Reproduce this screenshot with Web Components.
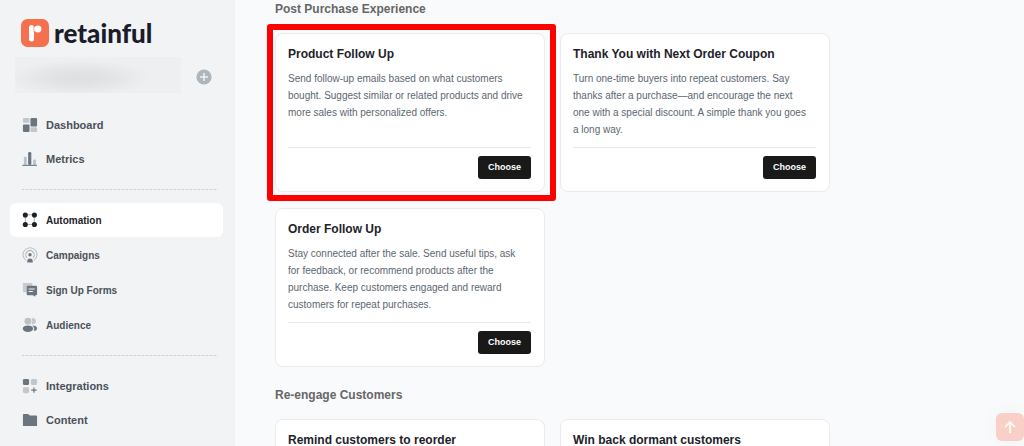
<!DOCTYPE html>
<html lang="en">
<head>
  <meta charset="UTF-8">
  <meta name="viewport" content="width=device-width, initial-scale=1.0">
  <title>Retainful - Automation</title>
  <style>
    body {
      margin: 0;
      font-family: "Liberation Sans", Arial, sans-serif;
      background-color: #f9fafc;
    }
  </style>
</head>
<body>
  <app-shell>
    <app-sidebar slot="sidebar"></app-sidebar>
    <workflow-section heading="Post Purchase Experience">
      <workflow-card heading="Product Follow Up" highlighted>Send follow-up emails based on what customers bought. Suggest similar or related products and drive more sales with personalized offers.</workflow-card>
      <workflow-card heading="Thank You with Next Order Coupon">Turn one-time buyers into repeat customers. Say thanks after a purchase—and encourage the next one with a special discount. A simple thank you goes a long way.</workflow-card>
      <workflow-card heading="Order Follow Up">Stay connected after the sale. Send useful tips, ask for feedback, or recommend products after the purchase. Keep customers engaged and reward customers for repeat purchases.</workflow-card>
    </workflow-section>
    <workflow-section heading="Re-engage Customers">
      <workflow-card heading="Remind customers to reorder"></workflow-card>
      <workflow-card heading="Win back dormant customers"></workflow-card>
    </workflow-section>
  </app-shell>
  <scroll-top></scroll-top>

  <script>
    const ICONS = {
      dashboard: `
        <rect x="1" y="1" width="7" height="5" rx="1" fill="#c1c7ca"/>
        <rect x="9" y="1" width="7" height="9" rx="1" fill="#6b757f"/>
        <rect x="1" y="8" width="7" height="8" rx="1" fill="#6b757f"/>
        <rect x="9" y="11" width="7" height="5" rx="1" fill="#c1c7ca"/>`,
      metrics: `
        <rect x="2" y="6" width="3" height="9" rx="1" fill="#bcc3c6"/>
        <rect x="6.5" y="1" width="3.4" height="14" rx="1.5" fill="#6b757f"/>
        <rect x="11.8" y="9" width="3" height="6" rx="1" fill="#bcc3c6"/>
        <rect x="0.3" y="14.7" width="15.6" height="1.1" fill="#6b757f"/>`,
      automation: `
        <rect x="3.5" y="3" width="9.5" height="10.2" fill="none" stroke="#a5a9ad" stroke-width="1"/>
        <g fill="#1d222a"><circle cx="3.5" cy="3.2" r="2.7"/><circle cx="13.2" cy="3.2" r="2.7"/>
        <circle cx="3.5" cy="13.2" r="2.7"/><circle cx="13.2" cy="13.2" r="2.7"/></g>`,
      campaigns: `
        <path d="M4.3 14.2a7.4 7.4 0 1 1 8.4 0" fill="none" stroke="#b8bec2" stroke-width="1.1"/>
        <path d="M5.3 11.5a4.500 4.500 0 1 1 6.4 0" fill="none" stroke="#a9b0b5" stroke-width="1.1"/>
        <circle cx="8.5" cy="8.3" r="1.8" fill="#6b757f"/>
        <path d="M5.6 16.6v-1.6a2.9 2.9 0 0 1 5.8 0v1.6z" fill="#6b757f"/>`,
      forms: `
        <path d="M1 1h10v4H5v6H1z" fill="#c7cbcf"/>
        <path d="M6 4h9a1 1 0 0 1 1 1v8a1 1 0 0 1-1 1h-1v1.7L11.5 14H6a1 1 0 0 1-1-1V5a1 1 0 0 1 1-1z" fill="#6b757f"/>
        <path d="M7 7.5h6.5M7 10.2h4.5" stroke="#f1f3f5" stroke-width="1.1"/>`,
      audience: `
        <path d="M10 1.6a3.2 3.2 0 1 1 0 5.6a5 5 0 0 0 0-5.6z" fill="#c1c7ca"/>
        <circle cx="6.3" cy="4.4" r="3.7" fill="#bcc3c6"/>
        <ellipse cx="6.3" cy="12.4" rx="5.5" ry="3.5" fill="#6b757f"/>
        <path d="M11 8.9c3 0 5 1.4 5 3.1s-1.3 2.7-3.5 2.8c1-2 .6-4.3-1.5-5.9z" fill="#6b757f"/>`,
      integrations: `
        <rect x="1" y="1" width="6.5" height="6.5" rx="1.5" fill="#6b757f"/>
        <rect x="9.5" y="1" width="6.5" height="6.5" rx="1.5" fill="#c1c7ca"/>
        <rect x="1" y="9.7" width="6.5" height="6.5" rx="1.5" fill="#c1c7ca"/>
        <path d="M12.7 10v5.8M9.8 12.9h5.8" stroke="#6b757f" stroke-width="1.3"/>`,
      content: `
        <path d="M1 3a1 1 0 0 1 1-1h4.5l1.8 1.7H15a1 1 0 0 1 1 1V15H1z" fill="#6b757f"/>`
    };

    class AppShell extends HTMLElement {
      constructor() {
        super();
        this.attachShadow({ mode: 'open' });
      }

      connectedCallback() {
        this.shadowRoot.innerHTML = `
          <style>
            :host {
              display: flex;
              height: 100vh;
              overflow: hidden;
            }
            slot[name="sidebar"] {
              display: block;
              flex: 0 0 235px;
            }
            main {
              flex: 1;
              min-width: 0;
              padding: 1px 40px 0;
            }
          </style>
          <slot name="sidebar"></slot>
          <main><slot></slot></main>
        `;
      }
    }

    class AppLogo extends HTMLElement {
      constructor() {
        super();
        this.attachShadow({ mode: 'open' });
      }

      connectedCallback() {
        this.shadowRoot.innerHTML = `
          <style>
            :host {
              display: flex;
              align-items: center;
              gap: 5px;
              height: 28px;
            }
            svg {
              width: 28px;
              height: 28px;
            }
            span {
              font: 900 26px/28px Lato, sans-serif;
              color: #1b1c29;
            }
          </style>
          <svg viewBox="0 0 28 28" aria-hidden="true">
            <rect width="28" height="28" rx="6.5" fill="#f4704f"/>
            <rect x="8" y="6" width="5" height="16.5" rx="2.5" fill="#fff"/>
            <path d="M12 7.5l3 1v3l-3 2z" fill="#fbd0c4"/>
            <circle cx="17" cy="10" r="3.4" fill="#fff"/>
          </svg>
          <span>retainful</span>
        `;
      }
    }

    class NavItem extends HTMLElement {
      constructor() {
        super();
        this.attachShadow({ mode: 'open' });
      }

      connectedCallback() {
        this.shadowRoot.innerHTML = `
          <style>
            :host {
              display: block;
              font-size: 11px;
              color: #4b5158;
            }
            :host([sub]) {
              font-size: 10px;
            }
            :host([active]) {
              color: #1d222a;
            }
            a {
              display: flex;
              align-items: center;
              gap: 8px;
              height: 34px;
              padding: 0 12px;
              border-radius: 6px;
              color: inherit;
              font-weight: bold;
              text-decoration: none;
            }
            :host([active]) a {
              background-color: #fff;
            }
            svg {
              width: 16px;
              height: 16px;
            }
          </style>
          <a href="#">
            <svg viewBox="0 0 17 17" aria-hidden="true">${ICONS[this.getAttribute('icon')]}</svg>
            <slot></slot>
          </a>
        `;
      }
    }

    class AppSidebar extends HTMLElement {
      constructor() {
        super();
        this.attachShadow({ mode: 'open' });
      }

      connectedCallback() {
        this.shadowRoot.innerHTML = `
          <style>
            :host {
              display: block;
              box-sizing: border-box;
              height: 100%;
              padding-top: 19px;
              background-color: #f1f3f5;
            }
            app-logo {
              margin-left: 21px;
            }
            .store {
              display: flex;
              align-items: center;
              justify-content: space-between;
              margin: 10px 23px 15px 15px;
            }
            .store-name {
              width: 166px;
              height: 36px;
              background: radial-gradient(ellipse 72px 18px at 64px 21px, #dedfe1, #e2e3e5 40%, #eeeff1);
            }
            button {
              padding: 4px 0 0;
              border: 0;
              background: none;
            }
            button svg {
              display: block;
            }
            nav {
              margin: 0 12px 0 10px;
            }
            .group {
              display: grid;
            }
            .sub {
              gap: 1px;
            }
            hr {
              height: 1px;
              margin: 13px 5px 13px 12px;
              border: 0;
              background: repeating-linear-gradient(90deg, #cdd0d3 0 2px, #e6e8ea 2px 4px);
            }
          </style>
          <app-logo></app-logo>
          <div class="store">
            <div class="store-name"></div>
            <button type="button" aria-label="Add store">
              <svg width="16" height="16" viewBox="0 0 16 16">
                <circle cx="8" cy="8" r="7.6" fill="#adb5bd"/>
                <path d="M8 4v8M4 8h8" stroke="#f1f3f5" stroke-width="1.5"/>
              </svg>
            </button>
          </div>
          <nav>
            <div class="group">
              <nav-item icon="dashboard">Dashboard</nav-item>
              <nav-item icon="metrics">Metrics</nav-item>
            </div>
            <hr>
            <div class="group sub">
              <nav-item icon="automation" sub active>Automation</nav-item>
              <nav-item icon="campaigns" sub>Campaigns</nav-item>
              <nav-item icon="forms" sub>Sign Up Forms</nav-item>
              <nav-item icon="audience" sub>Audience</nav-item>
            </div>
            <hr>
            <div class="group">
              <nav-item icon="integrations">Integrations</nav-item>
              <nav-item icon="content">Content</nav-item>
            </div>
          </nav>
        `;
      }
    }

    class WorkflowSection extends HTMLElement {
      constructor() {
        super();
        this.attachShadow({ mode: 'open' });
      }

      connectedCallback() {
        this.shadowRoot.innerHTML = `
          <style>
            :host {
              display: block;
              margin-bottom: 20px;
            }
            h2 {
              margin: 0 0 16px;
              font-size: 12px;
              line-height: 16px;
              color: #666;
            }
            .cards {
              display: grid;
              grid-template-columns: 1fr 1fr;
              gap: 16px 15px;
              max-width: 555px;
            }
          </style>
          <h2>${this.getAttribute('heading')}</h2>
          <div class="cards"><slot></slot></div>
        `;
      }
    }

    class WorkflowCard extends HTMLElement {
      constructor() {
        super();
        this.attachShadow({ mode: 'open' });
      }

      connectedCallback() {
        // cards without a description can't be chosen yet
        const footer = this.textContent.trim()
          ? '<footer><button type="button">Choose</button></footer>'
          : '';

        this.shadowRoot.innerHTML = `
          <style>
            :host {
              display: flex;
              flex-direction: column;
              position: relative;
              padding: 12px 13px 12px 12px;
              border: 1px solid #e9ebee;
              border-radius: 8px;
              background-color: #fff;
            }
            :host([highlighted])::after {
              content: "";
              position: absolute;
              inset: -10px -12px -10px -9px;
              border: 6px solid #f00;
              border-radius: 3px;
              pointer-events: none;
            }
            h3 {
              margin: 0 0 8px;
              font-size: 12px;
              line-height: 16px;
              color: #1d222a;
            }
            p {
              flex: 1;
              min-height: 68px;
              margin: 0 0 9px;
              padding-right: 5px;
              font-size: 10px;
              line-height: 17px;
              color: #5c666f;
            }
            footer {
              display: flex;
              justify-content: flex-end;
              padding-top: 8px;
              border-top: 1px solid #e6e8ea;
            }
            button {
              height: 23px;
              padding: 0 10px;
              border: 0;
              border-radius: 3px;
              background-color: #191919;
              color: #fff;
              font: bold 9px/23px "Liberation Sans", Arial, sans-serif;
              cursor: pointer;
            }
          </style>
          <h3>${this.getAttribute('heading')}</h3>
          <p><slot></slot></p>
          ${footer}
        `;
      }
    }

    class ScrollTop extends HTMLElement {
      constructor() {
        super();
        this.attachShadow({ mode: 'open' });
      }

      connectedCallback() {
        this.shadowRoot.innerHTML = `
          <style>
            :host {
              display: block;
              position: fixed;
              right: 0;
              bottom: 5px;
            }
            button {
              display: grid;
              place-items: center;
              width: 28px;
              height: 28px;
              padding: 0;
              border: 0;
              border-radius: 6px;
              background-color: #f8d0c8;
              box-shadow: 0 0 20px rgba(0, 0, 0, 0.04);
            }
          </style>
          <button type="button" aria-label="Back to top">
            <svg width="12" height="12" viewBox="0 0 12 12" fill="none" stroke="#fff" stroke-width="1.5">
              <path d="M6 12V1.5M1 6l5-5l5 5"/>
            </svg>
          </button>
        `;
        this.shadowRoot.querySelector('button').addEventListener('click', () => window.scrollTo(0, 0));
      }
    }

    customElements.define('app-shell', AppShell);
    customElements.define('app-logo', AppLogo);
    customElements.define('nav-item', NavItem);
    customElements.define('app-sidebar', AppSidebar);
    customElements.define('workflow-section', WorkflowSection);
    customElements.define('workflow-card', WorkflowCard);
    customElements.define('scroll-top', ScrollTop);
  </script>
</body>
</html>
